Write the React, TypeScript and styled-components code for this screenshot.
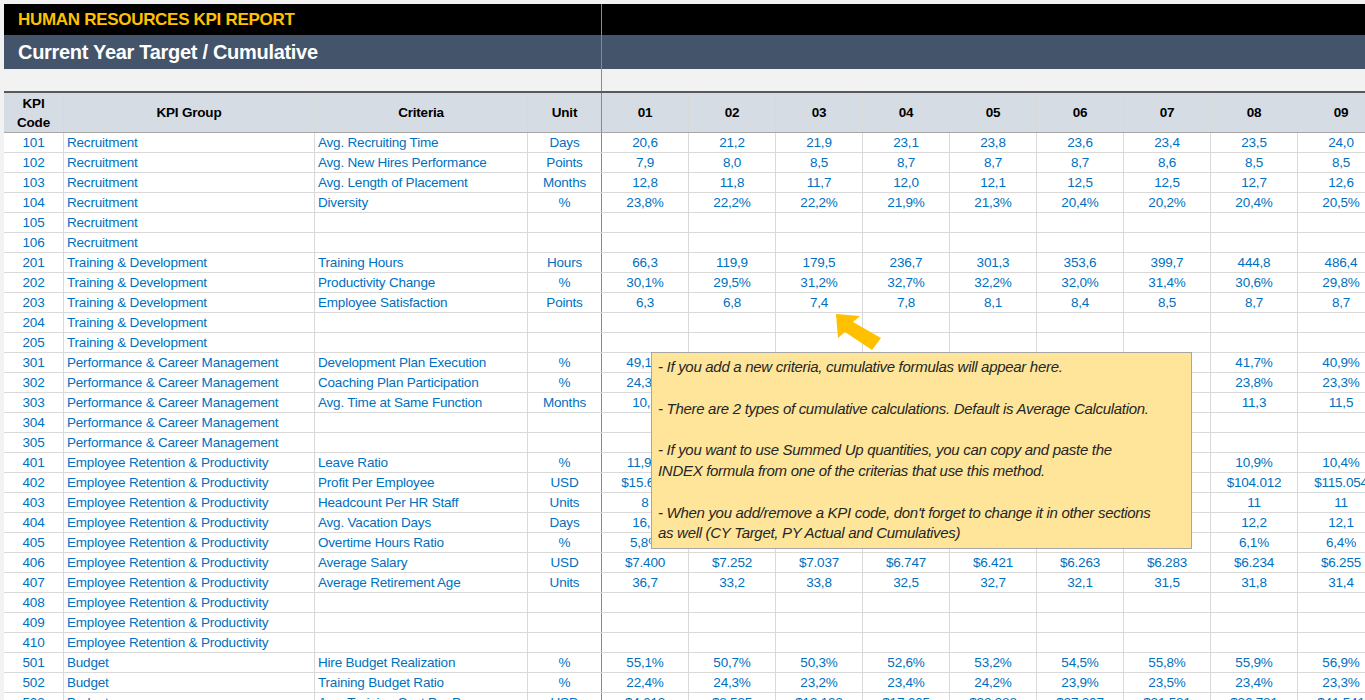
import React from 'react';
import styled, { createGlobalStyle } from 'styled-components';

const Global = createGlobalStyle`
    body { margin: 0; background: #f2f2f2; font-family: "Liberation Sans", Arial, sans-serif; overflow: hidden; }
`;

const Page = styled.div`
    position: relative;
    width: 1365px;
    height: 700px;
    overflow: hidden;
    padding: 4px 0 0 4px;
    box-sizing: border-box;
`;

const Band = styled.div<{ $bg: string; $h: number }>`
    display: grid;
    grid-template-columns: 598px 1fr;
    height: ${p => p.$h}px;
    background: ${p => p.$bg};
`;

const BandCell = styled.div<{ $color: string; $size: number }>`
    display: flex;
    align-items: center;
    padding-left: 14px;
    color: ${p => p.$color};
    font-size: ${p => p.$size}px;
    font-weight: bold;
    border-right: 1px solid #8a8a8a;
    letter-spacing: -0.3px;
`;

const Gap = styled.div`
    height: 22px;
    display: grid;
    grid-template-columns: 598px 1fr;
    & > div { border-right: 1px solid #8a8a8a; }
`;

const COLS = '60px 251px 213px 74px repeat(10, 87px)';

const Row = styled.div<{ $head?: boolean }>`
    display: grid;
    grid-template-columns: ${COLS};
    height: ${p => (p.$head ? 42 : 20)}px;
    background: ${p => (p.$head ? '#d6dce4' : '#ffffff')};
    border-top: ${p => (p.$head ? '2px solid #595959' : 'none')};
    border-bottom: 1px solid ${p => (p.$head ? '#a6a6a6' : '#d9d9d9')};
    box-sizing: border-box;
`;

const Cell = styled.div<{ $align?: string; $head?: boolean; $freeze?: boolean }>`
    display: flex;
    align-items: center;
    justify-content: ${p => p.$align || 'center'};
    padding: 0 3px;
    font-size: 13.5px;
    line-height: 19px;
    text-align: center;
    white-space: nowrap;
    overflow: hidden;
    color: ${p => (p.$head ? '#000' : '#0070c0')};
    font-weight: ${p => (p.$head ? 'bold' : 'normal')};
    border-right: 1px solid ${p => (p.$freeze ? '#8a8a8a' : '#d9d9d9')};
    letter-spacing: -0.2px;
`;

const Note = styled.div`
    position: absolute;
    left: 651px;
    top: 352px;
    width: 541px;
    height: 197px;
    box-sizing: border-box;
    background: #fee599;
    border: 1px solid #a6a6a6;
    padding: 4px 40px 4px 6px;
    font-style: italic;
    font-size: 15px;
    line-height: 20.8px;
    color: #262626;
    letter-spacing: -0.3px;
    p { margin: 0 0 20.8px; }
    p:first-child, p:nth-child(2) { margin-right: -40px; }
    p:last-child { margin: 0; }
`;

const Arrow = styled.svg`
    position: absolute;
    left: 834px;
    top: 310px;
`;

type R = [string, string, string, string, string[]];
const e: string[] = [];
const TR = 'Training & Development';
const PC = 'Performance & Career Management';
const ER = 'Employee Retention & Productivity';
const sp = (s: string) => s.split(' ');

const rows: R[] = [
    ['101', 'Recruitment', 'Avg. Recruiting Time', 'Days', sp('20,6 21,2 21,9 23,1 23,8 23,6 23,4 23,5 24,0 24,3')],
    ['102', 'Recruitment', 'Avg. New Hires Performance', 'Points', sp('7,9 8,0 8,5 8,7 8,7 8,7 8,6 8,5 8,5 8,4')],
    ['103', 'Recruitment', 'Avg. Length of Placement', 'Months', sp('12,8 11,8 11,7 12,0 12,1 12,5 12,5 12,7 12,6 12,5')],
    ['104', 'Recruitment', 'Diversity', '%', sp('23,8% 22,2% 22,2% 21,9% 21,3% 20,4% 20,2% 20,4% 20,5% 20,6%')],
    ['105', 'Recruitment', '', '', e],
    ['106', 'Recruitment', '', '', e],
    ['201', TR, 'Training Hours', 'Hours', sp('66,3 119,9 179,5 236,7 301,3 353,6 399,7 444,8 486,4 530,1')],
    ['202', TR, 'Productivity Change', '%', sp('30,1% 29,5% 31,2% 32,7% 32,2% 32,0% 31,4% 30,6% 29,8% 29,5%')],
    ['203', TR, 'Employee Satisfaction', 'Points', sp('6,3 6,8 7,4 7,8 8,1 8,4 8,5 8,7 8,7 8,8')],
    ['204', TR, '', '', e],
    ['205', TR, '', '', e],
    ['301', PC, 'Development Plan Execution', '%', sp('49,1% 46,2% 44,8% 43,9% 43,1% 42,6% 42,2% 41,7% 40,9% 40,5%')],
    ['302', PC, 'Coaching Plan Participation', '%', sp('24,3% 24,6% 24,1% 24,0% 23,9% 24,1% 23,9% 23,8% 23,3% 23,1%')],
    ['303', PC, 'Avg. Time at Same Function', 'Months', sp('10,4 10,6 10,7 10,9 11,0 11,1 11,2 11,3 11,5 11,6')],
    ['304', PC, '', '', e],
    ['305', PC, '', '', e],
    ['401', ER, 'Leave Ratio', '%', sp('11,9% 11,6% 11,4% 11,3% 11,2% 11,1% 11,0% 10,9% 10,4% 10,2%')],
    ['402', ER, 'Profit Per Employee', 'USD', sp('$15.612 $28.410 $41.335 $53.020 $65.870 $78.114 $91.337 $104.012 $115.054 $126.880')],
    ['403', ER, 'Headcount Per HR Staff', 'Units', sp('8 9 9 10 10 10 11 11 11 11')],
    ['404', ER, 'Avg. Vacation Days', 'Days', sp('16,1 15,2 14,6 14,0 13,4 13,0 12,6 12,2 12,1 11,9')],
    ['405', ER, 'Overtime Hours Ratio', '%', sp('5,8% 5,9% 6,0% 6,1% 6,0% 6,1% 6,2% 6,1% 6,4% 6,5%')],
    ['406', ER, 'Average Salary', 'USD', sp('$7.400 $7.252 $7.037 $6.747 $6.421 $6.263 $6.283 $6.234 $6.255 $6.240')],
    ['407', ER, 'Average Retirement Age', 'Units', sp('36,7 33,2 33,8 32,5 32,7 32,1 31,5 31,8 31,4 31,2')],
    ['408', ER, '', '', e],
    ['409', ER, '', '', e],
    ['410', ER, '', '', e],
    ['501', 'Budget', 'Hire Budget Realization', '%', sp('55,1% 50,7% 50,3% 52,6% 53,2% 54,5% 55,8% 55,9% 56,9% 57,1%')],
    ['502', 'Budget', 'Training Budget Ratio', '%', sp('22,4% 24,3% 23,2% 23,4% 24,2% 23,9% 23,5% 23,4% 23,3% 23,2%')],
    ['503', 'Budget', 'Avg. Training Cost Per Person', 'USD', sp('$4.613 $8.535 $13.133 $17.665 $22.388 $27.307 $31.581 $36.731 $41.541 $46.020')],
];

const months = ['01', '02', '03', '04', '05', '06', '07', '08', '09', '10'];

export default function App() {
    return (
        <Page>
            <Global />
            <Band $bg="#000000" $h={31}>
                <BandCell $color="#ffc000" $size={17}>HUMAN RESOURCES KPI REPORT</BandCell>
                <div />
            </Band>
            <Band $bg="#44546a" $h={34}>
                <BandCell $color="#ffffff" $size={20}>Current Year Target / Cumulative</BandCell>
                <div />
            </Band>
            <Gap>
                <div />
                <span />
            </Gap>
            <Row $head>
                <Cell $head>KPI<br />Code</Cell>
                <Cell $head>KPI Group</Cell>
                <Cell $head>Criteria</Cell>
                <Cell $head $freeze>Unit</Cell>
                {months.map(m => (
                    <Cell $head key={m}>{m}</Cell>
                ))}
            </Row>
            {rows.map(([code, group, crit, unit, vals]) => (
                <Row key={code}>
                    <Cell>{code}</Cell>
                    <Cell $align="flex-start">{group}</Cell>
                    <Cell $align="flex-start">{crit}</Cell>
                    <Cell $freeze>{unit}</Cell>
                    {months.map((m, i) => (
                        <Cell key={m}>{vals[i] || ''}</Cell>
                    ))}
                </Row>
            ))}
            <Arrow width="50" height="42" viewBox="0 0 50 42">
                <polygon points="2,36 4,12 11,18 38,0 47,12 19,28 26,34" fill="#ffc000" transform="translate(0,40) scale(1,-1)" />
            </Arrow>
            <Note>
                <p>- If you add a new criteria, cumulative formulas will appear here.</p>
                <p>- There are 2 types of cumulative calculations. Default is Average Calculation.</p>
                <p>- If you want to use Summed Up quantities, you can copy and paste the INDEX formula from one of the criterias that use this method.</p>
                <p>- When you add/remove a KPI code, don't forget to change it in other sections as well (CY Target, PY Actual and Cumulatives)</p>
            </Note>
        </Page>
    );
}
